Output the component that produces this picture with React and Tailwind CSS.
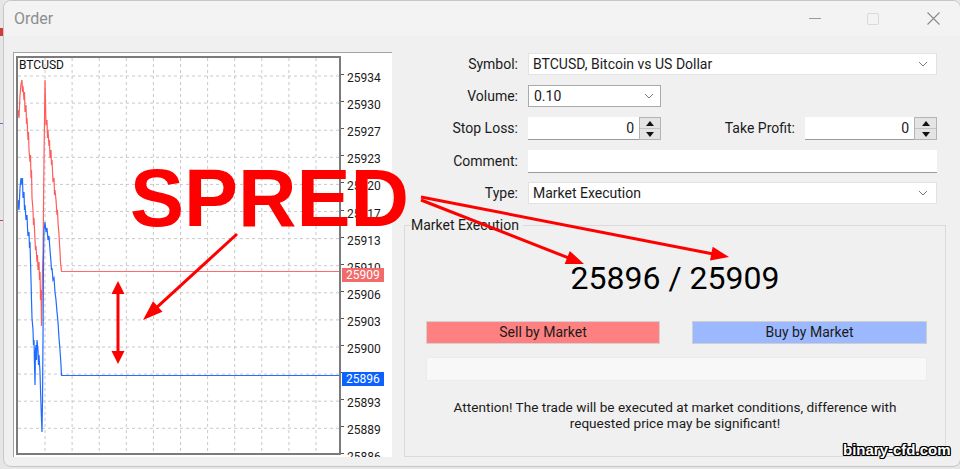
import React from "react";

// price grid of the mini chart
const GRID_X = Array.from({ length: 11 }, (_, i) => 45 + i * 27.1);
const GRID_Y = Array.from({ length: 14 }, (_, i) => 76 + i * 27.1);
const PRICES = [25934, 25930, 25927, 25923, 25920, 25917, 25913, 25910, 25906, 25903, 25900, null, 25893, 25889, 25886];

const ASK =
  "17,122 18,110 19,118 20,95 21,84 22,80 22.5,92 23,86 24,100 24.5,92 25,112 26,105 26.5,124 27,118 28,140 28.5,132 29,150 30,162 30.5,155 31,178 31.5,170 32,198 33,210 33.5,225 34,218 35,240 35.5,250 36,246 37,262 37.5,255 38,270 39,262 39.5,280 40,272 40.5,300 41,290 41.5,326 42,300 42.5,270 43,255 44,160 45,80 45.5,100 46,125 47,120 47.5,138 48,130 49,146 49.5,140 50,158 51,150 51.5,165 52,160 53,182 54,178 54.5,195 55,190 56,200 57,215 57.5,210 58,222 59,235 60,252 60.5,262 61.5,271.5";

const BID =
  "17,218 18,200 19,210 20,188 21,178 22,185 22.5,178 23,198 24,192 24.5,210 25,205 26,220 27,215 27.5,228 28,236 29,232 29.5,248 30,242 30.5,262 31,280 31.5,300 32,318 33,330 33.5,345 34,340 34.5,365 35,385 35.5,350 36,345 36.5,360 37,340 38,350 38.5,365 39,355 40,372 40.5,390 41,405 41.5,420 42,432 42.5,400 43,340 43.5,260 44,230 45,222 46,232 47,228 48,240 49,236 50,250 51,262 51.5,270 52,268 53,280 54,278 55,292 56,300 57,312 58,322 58.5,330 59,338 60,350 61,365 61.5,375.5";

const Arrow = ({ from, to, len = 19, half = 7 }) => {
  const dx = to[0] - from[0];
  const dy = to[1] - from[1];
  const d = Math.hypot(dx, dy);
  const ux = dx / d;
  const uy = dy / d;
  const bx = to[0] - ux * len;
  const by = to[1] - uy * len;
  const pts = `${to[0]},${to[1]} ${bx - uy * half},${by + ux * half} ${bx + uy * half},${by - ux * half}`;
  return (
    <g>
      <line x1={from[0]} y1={from[1]} x2={bx + ux * 2} y2={by + uy * 2} stroke="#ff0000" strokeWidth="3" />
      <polygon points={pts} fill="#ff0000" />
    </g>
  );
};

const Chevron = () => (
  <svg width="10" height="6" viewBox="0 0 10 6">
    <polyline points="1,1 5,5 9,1" fill="none" stroke="#7a7a7a" strokeWidth="1" />
  </svg>
);

const Spinner = ({ w = "w-[22px]" }) => (
  <div className={`flex flex-col ${w} h-[23px] border border-[#b4b4b4] bg-[#e4e4e4]`}>
    <div className="flex-1 flex items-center justify-center border-b border-[#c4c4c4]">
      <svg width="8" height="5" viewBox="0 0 8 5">
        <polygon points="4,0 8,5 0,5" fill="#111" />
      </svg>
    </div>
    <div className="flex-1 flex items-center justify-center">
      <svg width="8" height="5" viewBox="0 0 8 5">
        <polygon points="0,0 8,0 4,5" fill="#111" />
      </svg>
    </div>
  </div>
);

const Label = ({ children }) => (
  <div className="w-[114px] shrink-0 text-right">{children}</div>
);

function Chart() {
  return (
    <div className="ml-[9px] mt-[16px] w-[379px] h-[405px] bg-white border-t border-l border-[#a3a3a3] flex pl-[2px] pt-[3px] overflow-hidden">
      <div className="relative w-[325px] h-[399px] border-2 border-[#7b7b7b] shrink-0">
        <svg className="absolute inset-0" width="321" height="395" viewBox="18 58 321 395">
          {GRID_X.map((x) => (
            <line key={x} x1={x} y1="58" x2={x} y2="453" stroke="#c8c8c8" strokeDasharray="3 3" />
          ))}
          {GRID_Y.map((y) => (
            <line key={y} x1="18" y1={y} x2="339" y2={y} stroke="#c8c8c8" strokeDasharray="3 3" />
          ))}
          <polyline points={ASK} fill="none" stroke="#ff5c5c" strokeWidth="1.2" />
          <polyline points={BID} fill="none" stroke="#1f6bff" strokeWidth="1.2" />
          {/* current ask / bid levels */}
          <line x1="61" y1="271.5" x2="339" y2="271.5" stroke="#ff6a6a" strokeWidth="1" shapeRendering="crispEdges" />
          <line x1="61" y1="375.5" x2="339" y2="375.5" stroke="#2a6cff" strokeWidth="1" shapeRendering="crispEdges" />
        </svg>
        <span className="absolute left-[1px] top-[0px] text-[12px] leading-[14px] text-[#111]">BTCUSD</span>
      </div>
      <div className="relative flex-1 text-[12px] leading-[14px] text-[#1a1a1a]">
        {PRICES.map((p, i) => {
          const y = 76 + i * 27.1 - 56;
          return (
            <React.Fragment key={i}>
              <div className="absolute left-0 w-[3px] h-px bg-[#555]" style={{ top: y - 2 }} />
              {p && (
                <div className="absolute left-[6px]" style={{ top: y - 5 }}>
                  {p}
                </div>
              )}
            </React.Fragment>
          );
        })}
        <div className="absolute left-[1px] top-[212px] w-[42px] h-[14px] bg-[#f26a6a] text-white pl-[4px]">25909</div>
        <div className="absolute left-[1px] top-[316px] w-[42px] h-[14px] bg-[#0b62ff] text-white pl-[4px]">25896</div>
      </div>
    </div>
  );
}

function OrderForm() {
  return (
    <div className="ml-[12px] mt-[17px] w-[542px] flex flex-col text-[14px] text-[#1b1b1b]">
      <div className="flex items-center h-[22px]">
        <Label>Symbol:</Label>
        <div className="ml-[10px] w-[409px] h-full bg-white border border-[#e2e2e2] flex items-center justify-between pl-[4px] pr-[8px]">
          <span>BTCUSD, Bitcoin vs US Dollar</span>
          <Chevron />
        </div>
      </div>

      <div className="flex items-center h-[22px] mt-[10px]">
        <Label>Volume:</Label>
        <div className="ml-[10px] w-[133px] h-full bg-white border border-[#a9a9a9] flex items-center justify-between pl-[5px] pr-[6px]">
          <span>0.10</span>
          <Chevron />
        </div>
      </div>

      <div className="flex items-center h-[23px] mt-[10px]">
        <Label>Stop Loss:</Label>
        <div className="ml-[10px] w-[111px] h-full bg-white border-b border-[#9a9a9a] flex items-center justify-end pr-[5px]">0</div>
        <Spinner />
        <div className="w-[134px] text-right">Take Profit:</div>
        <div className="ml-[10px] w-[109px] h-full bg-white border-b border-[#9a9a9a] flex items-center justify-end pr-[5px]">0</div>
        <Spinner w="w-[23px]" />
      </div>

      <div className="flex items-center h-[23px] mt-[10px]">
        <Label>Comment:</Label>
        <div className="ml-[10px] w-[409px] h-full bg-white border-b border-[#9a9a9a]" />
      </div>

      <div className="flex items-center h-[22px] mt-[9px]">
        <Label>Type:</Label>
        <div className="ml-[10px] w-[409px] h-full bg-white border border-[#e2e2e2] flex items-center justify-between pl-[4px] pr-[8px]">
          <span>Market Execution</span>
          <Chevron />
        </div>
      </div>

      <div className="relative mt-[21px] h-[232px] border border-[#dadada] flex flex-col">
        <span className="absolute left-[6px] top-[-9px] bg-[#f0f0f0] pr-[4px] leading-[16px]">Market Execution</span>
        <div className="mt-[34px] text-center text-[32px] leading-[36px] text-black">25896 / 25909</div>
        <div className="flex mt-[25px] pl-[21px] gap-[32px] h-[23px]">
          <div className="w-[234px] h-full bg-[#ff8080] border border-[#d2d2d2] flex items-center justify-center">Sell by Market</div>
          <div className="w-[235px] h-full bg-[#9cb9ff] border border-[#cfcfcf] flex items-center justify-center">Buy by Market</div>
        </div>
        <div className="ml-[21px] mt-[13px] w-[501px] h-[24px] bg-[#f8f8f8] border border-[#ececec]" />
        <p className="mt-[18px] text-center text-[13.6px] leading-[16px]">
          Attention! The trade will be executed at market conditions, difference with
          <br />
          requested price may be significant!
        </p>
      </div>
    </div>
  );
}

export default function App() {
  return (
    <div className="relative w-[960px] h-[469px] overflow-hidden bg-[#e6e6e6] font-['Roboto','Liberation_Sans',sans-serif]">
      <div className="absolute left-0 top-[28px] w-[3px] h-[8px] bg-[#d43c3c]" />
      <div className="absolute left-0 top-[123px] w-[3px] h-px bg-[#6c6cc8]" />
      <div className="absolute left-0 top-[220px] w-[3px] h-px bg-[#d43c3c]" />

      <div className="ml-[3px] w-[958px] h-[467px] rounded-[8px] border border-[#c6c6c6] bg-[#f0f0f0] overflow-hidden flex flex-col">
        <div className="h-[35px] shrink-0 bg-[#f3f3f3] flex items-center pl-[10px]">
          <span className="text-[16px] text-[#8e8e8e]">Order</span>
          <div className="ml-auto flex items-center">
            <div className="w-[12px] h-px bg-[#9a9a9a]" />
            <div className="ml-[46px] w-[12px] h-[12px] border border-[#d9d9d9] rounded-[2px]" />
            <svg className="ml-[48px] mr-[20px]" width="13" height="13" viewBox="0 0 13 13">
              <path d="M0.5 0.5 L12.5 12.5 M12.5 0.5 L0.5 12.5" stroke="#8a8a8a" strokeWidth="1.1" />
            </svg>
          </div>
        </div>
        <div className="flex">
          <Chart />
          <OrderForm />
        </div>
      </div>

      {/* red callout over the dialog */}
      <div className="absolute left-[130px] top-[158px] text-[81px] leading-none font-bold text-[#ff0000] font-['Liberation_Sans',Arial,sans-serif]">
        SPRED
      </div>
      <svg className="absolute inset-0 pointer-events-none" width="960" height="469" viewBox="0 0 960 469">
        <Arrow from={[237, 234]} to={[143, 320]} len={20} half={7} />
        <Arrow from={[421, 200]} to={[584, 264]} len={18} half={7} />
        <Arrow from={[421, 197]} to={[729, 257]} len={18} half={7} />
        <line x1="118" y1="292" x2="118" y2="353" stroke="#ff0000" strokeWidth="3" />
        <polygon points="118,281 124.5,294 111.5,294" fill="#ff0000" />
        <polygon points="118,364 124.5,351 111.5,351" fill="#ff0000" />
      </svg>

      <div className="absolute left-[843px] top-[440px] text-[15px] font-bold text-white leading-[20px] font-['Liberation_Sans',Arial,sans-serif] [text-shadow:-1px_-1px_0_#000,1px_-1px_0_#000,-1px_1px_0_#000,1px_1px_0_#000,0_1px_0_#000,0_-1px_0_#000,1px_0_0_#000,-1px_0_0_#000]">
        binary-cfd.com
      </div>
    </div>
  );
}
